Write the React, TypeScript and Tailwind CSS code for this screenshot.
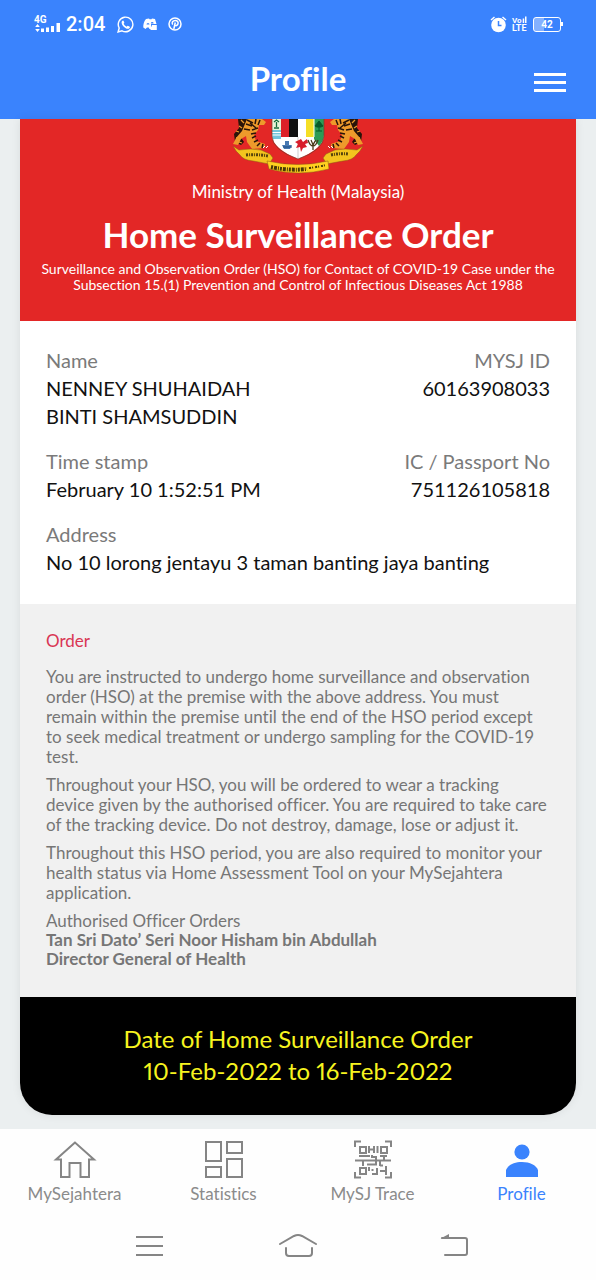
import React from "react";

function StatusBar() {
  return (
    <div className="flex h-12 items-center justify-between pr-[35px] pl-[34px]">
      <div className="flex items-center">
        <svg className="overflow-visible" width="28" height="20" viewBox="0 0 28 20" fill="#fff" aria-label="4G signal">
          <text x="0" y="9" fontSize="10" fontWeight="700" fontFamily="Roboto, sans-serif">4G</text>
          <path d="M3.500 10l2.300 3H1.200zM3.500 18l2.300-3H1.200z" />
          <path d="M7 14.500h3V18H7zM12 13.500h3V18h-3zM17 12h3v6h-3zM22.500 9H26v9h-3.500z" />
        </svg>
        <span className="ml-1 font-[Roboto,sans-serif] text-[20px] leading-6 font-medium">2:04</span>
        <svg className="ml-3" width="17" height="17" viewBox="0 0 24 24" fill="none" stroke="#fff" strokeWidth="2" aria-label="WhatsApp">
          <path d="M1.500 22.500l1.600-5.600a10.300 10.300 0 1 1 4 4z" />
          <path fill="#fff" stroke="none" d="M8.500 6.200c-.8 0-2 1.200-2 2.800 0 4 5.400 9 8.800 9 1.600 0 3-1 3-2.500 0-.5-2.900-2-3.300-1.800-.5.300-1.100 1.500-1.500 1.400-1.600-.6-3.500-2.400-4.100-4 0-.4 1-1 1-1.500s-1.100-3.300-1.900-3.400z" />
        </svg>
        <svg className="ml-2" width="16" height="14" viewBox="0 0 16 14" fill="#fff" aria-label="Game">
          <path d="M4 2l3-.5.5.8h2l.5-.8 3 .5 1.500 5H9v5H7.500l-.8-1.500H5L3.500 12 1.300 10.500C1.100 7.500 2 4 4 2z" />
          <path d="M9.800 8h5v5H8.500v-3.500h1.300z" />
          <path d="M4.500 7.500a1.500 1.500 0 0 1 3 0zM8.800 6.500a1.400 1.400 0 0 1 2.800 0z" fill="#3a83fd" />
        </svg>
        <svg className="ml-[10px]" width="14" height="14" viewBox="0 0 14 14" fill="none" stroke="#fff" aria-label="Pinterest">
          <circle cx="7" cy="7" r="6" strokeWidth="1.500" />
          <path strokeWidth="1.500" d="M4.700 7.700C3.300 5.500 5 3.500 7.200 3.500S10.500 5 10 6.800 7.500 9.300 6.800 8M7.300 5.500L5.800 12" />
        </svg>
      </div>
      <div className="flex items-center">
        <svg width="17" height="17" viewBox="0 0 17 17" fill="#fff" aria-label="Alarm">
          <circle cx="8.500" cy="9" r="7.300" />
          <path d="M1 4L4.500 1M12.500 1L16 4" stroke="#fff" strokeWidth="1.500" />
          <path d="M8.500 5v4.500h3" fill="none" stroke="#3a83fd" strokeWidth="1.500" />
        </svg>
        <svg className="ml-[5px] overflow-visible" width="16" height="16" viewBox="0 0 16 16" fill="#fff" aria-label="VoLTE">
          <text x="0" y="7" fontSize="8" fontWeight="700" fontFamily="Roboto, sans-serif">Vo</text>
          <path d="M10.700 2.500h1.500V7h-1.500zM13 .5h1.500V7H13z" />
          <text x="0" y="15" fontSize="9" fontWeight="700" fontFamily="Roboto, sans-serif">LTE</text>
        </svg>
        <span className="relative ml-[5px] flex h-[15px] w-7 items-center justify-center rounded-[3px] border border-white bg-linear-to-r from-[#84b1ff] from-40% to-transparent to-40% font-[Roboto,sans-serif] text-[10px] font-bold">
          42
          <span className="absolute -right-[3px] h-1 w-[2px] bg-white" />
        </span>
      </div>
    </div>
  );
}

function Tiger() {
  return (
    <g>
      <path d="M6 0h10l3 6-6 5-5 6 4 6-3 3-6-3-1-8 5-6z" fill="#2a1409" />
      <path d="M15 0h15l4 3-2 3-5 0-1 5-4 5 2 6 9 3-1 4-12 1-5-7-1-6-5 3-3 6-5-1 3-6 6-7z" fill="#ee9a2b" />
      <path d="M9 1l3 3M7 7l3 2M4 12l3 1M4 19l4 0M7 23l3 1" stroke="#ee9a2b" strokeWidth="1.300" />
      <path d="M15 1l6 3M14 5l6 2M12 10l6 1M20 11l6-2M19 15l5-1M20 19l4-2M22 23l4-2M25 27l3-3M24 0l-1 5M28 1l-2 5M18 4l6 5M31 25l-1 4" stroke="#2a1409" strokeWidth="1.500" />
      <path d="M31 29l2-2M34 29l2-2" stroke="#fff" />
    </g>
  );
}

function CoatOfArms() {
  return (
    <svg className="block" width="132" height="56" viewBox="0 0 132 56" aria-label="Coat of arms of Malaysia">
      <Tiger />
      <g transform="translate(132 0) scale(-1 1)"><Tiger /></g>
      <path d="M40 0h52v16c0 10-12 18-26 24C52 34 40 26 40 16z" fill="#fff" />
      <path d="M40 0h9v11h-9z" fill="#e8f2d6" />
      <path d="M40 11h9v9h-8l-1-4z" fill="#72c4dc" />
      <path d="M40 13.500h9M40 16h9" stroke="#fff" />
      <path d="M49 0h8v18h-8z" fill="#dc2028" />
      <path d="M57 0h9v18h-9z" fill="#101010" />
      <path d="M66 0h8v18h-8z" fill="#fff" />
      <path d="M74 0h8v18h-8z" fill="#f5df25" />
      <path d="M82 0h10v16q0 6-5 11l-5-7z" fill="#2d9b55" />
      <path d="M82 0v18" stroke="#fff" />
      <path d="M44.500 3v5M42 3l2.500-2L47 3M42 9h5" stroke="#176c3c" strokeWidth="1.300" fill="none" />
      <path d="M87 2l4 5-2 1h-4l-2-1zM87 7v5M84 12h6" fill="#075b29" stroke="#075b29" />
      <path d="M53 22h4v4h3l-2 4h-6l-2-4h3z" fill="#4878b1" />
      <path d="M51 28h9" stroke="#194980" />
      <path d="M66 18v21" stroke="#999" strokeWidth=".5" />
      <path d="M69 20l2 3 4-3 1 4-3 1 2 3-4 1-2 4-1-5-4 1 2-4-3-2z" fill="#d81d2b" />
      <path d="M76 21q2 6 5 6t5-6M79 21q2 4 2 6 0-2 3-6M81 26v5" fill="none" stroke="#4b3a1a" strokeWidth="1.300" />
      <path d="M40 0v17q0 14 26 23 26-9 26-23V0" fill="none" stroke="#7a392b" strokeWidth=".7" />
      <path d="M1 27l6 4q12-2 22 0l9 4 3 4-4 6q-10-2-16-3-10-1-13-6-4-3-7-9z" fill="#f3c41e" stroke="#8a5916" strokeWidth=".5" />
      <path d="M131 27l-6 4q-12-2-22 0l-9 4-3 4 4 6q10-2 16-3 10-1 13-6 4-3 7-9z" fill="#f3c41e" stroke="#8a5916" strokeWidth=".5" />
      <path d="M35 42q31 7 61 0l1 8q-31 8-60 0z" fill="#ffd120" stroke="#8a5916" strokeWidth=".5" />
      <path d="M14 36q12-1 22 1M99 36q9-2 17-1" fill="none" stroke="#54420c" strokeWidth="3" strokeDasharray="2 1 1 1" />
      <path d="M39 48q18 4 36 2" fill="none" stroke="#473707" strokeWidth="4" strokeDasharray="2 1 3 1 1 1" />
      <path d="M77 49q9-1 17-3" fill="none" stroke="#473707" strokeWidth="2" strokeDasharray="2 1 1 2" />
    </svg>
  );
}

function Field({ label, value, right = false }: { label: string; value: React.ReactNode; right?: boolean }) {
  return (
    <div className={right ? "text-right" : ""}>
      <dt className="text-[#7a7a7a]">{label}</dt>
      <dd className="text-[#111]">{value}</dd>
    </div>
  );
}

function HomeIcon() {
  return (
    <svg width="44" height="40" viewBox="0 0 44 40" fill="none" stroke="#858585" strokeWidth="2">
      <path d="M22 2.500L3 19.500h5V37h8.500V23h11v14H36V19.500h5z" />
    </svg>
  );
}

function StatisticsIcon() {
  return (
    <svg width="40" height="40" viewBox="0 0 40 40" fill="none" stroke="#858585" strokeWidth="2">
      <path d="M2 2h15v19H2zM23 2h15v11H23zM2 27h15v10H2zM23 19h15v18H23z" />
    </svg>
  );
}

function TraceIcon() {
  return (
    <svg width="40" height="40" viewBox="0 0 40 40" fill="none" stroke="#858585" strokeWidth="2">
      <path d="M2 7V1.500h6M32 1.500h6V7M38 32v5.500h-6M8 37.500H2V32" />
      <path d="M7 7h6v6H7zM28 7h6v6h-6zM7 28h6v6H7z" />
      <path d="M16 6v7M16 9.500h5M21 6v7M24.500 6v7M6 16h11M19 15v2h4v3M27 16h7M31 16v4M2 20.500h36M10 21v5M14 24.500h9V21M27 21v5M27 25.500h3M16 27v4M19.500 29v2M19 34h5v-6M27 31h6M33 26v9" />
    </svg>
  );
}

function ProfileIcon() {
  return (
    <svg width="40" height="40" viewBox="0 0 40 40" fill="#3a83fd">
      <circle cx="20" cy="12" r="7.600" />
      <path d="M4 37V30c2-5 8-8 16-8s14 3 16 8v7z" />
    </svg>
  );
}

const tabs = [
  { label: "MySejahtera", Icon: HomeIcon },
  { label: "Statistics", Icon: StatisticsIcon },
  { label: "MySJ Trace", Icon: TraceIcon },
  { label: "Profile", Icon: ProfileIcon, active: true },
];

export default function App() {
  return (
    <div className="min-h-screen bg-[#ebeff0] font-[Lato,sans-serif] [font-variant-ligatures:none]">
      <header className="h-[119px] bg-[#3a83fd] text-white">
        <StatusBar />
        <div className="grid grid-cols-[1fr_auto_1fr] items-center px-[30px] pt-[6px]">
          <span />
          <h1 className="text-[33px] leading-[48px] font-bold">Profile</h1>
          <button aria-label="Open menu" className="mt-2 flex flex-col gap-[5px] justify-self-end">
            <span className="h-[3px] w-8 bg-white" />
            <span className="h-[3px] w-8 bg-white" />
            <span className="h-[3px] w-8 bg-white" />
          </button>
        </div>
      </header>

      <main className="px-5 pb-[14px]">
        <article className="overflow-hidden rounded-b-[32px] bg-white shadow-[0_0_10px_rgba(0,0,0,0.08)]">
          <section className="flex h-[202px] flex-col items-center bg-[#e32726] text-center text-white">
            <CoatOfArms />
            <p className="mt-[5px] text-[17px] leading-6">Ministry of Health (Malaysia)</p>
            <h2 className="mt-[6px] text-[35px] leading-[48px] font-bold">Home Surveillance Order</h2>
            <p className="mt-[3px] text-[14px] leading-4">
              Surveillance and Observation Order (HSO) for Contact of COVID-19 Case under the<br />
              Subsection 15.(1) Prevention and Control of Infectious Diseases Act 1988
            </p>
          </section>

          <dl className="flex flex-col gap-[17px] px-[26px] pt-[25px] pb-7 text-[20px] leading-7">
            <div className="flex justify-between">
              <Field label="Name" value={<>NENNEY SHUHAIDAH<br />BINTI SHAMSUDDIN</>} />
              <Field right label="MYSJ ID" value="60163908033" />
            </div>
            <div className="flex justify-between">
              <Field label="Time stamp" value="February 10 1:52:51 PM" />
              <Field right label="IC / Passport No" value="751126105818" />
            </div>
            <Field label="Address" value="No 10 lorong jentayu 3 taman banting jaya banting" />
          </dl>

          <section className="bg-[#f1f1f1] px-[26px] pt-[27px] pb-[29px] text-[17px] leading-5 text-[#767676]">
            <h3 className="mb-4 text-[#d93654]">Order</h3>
            <div className="flex flex-col gap-2">
              <p>
                You are instructed to undergo home surveillance and observation<br />
                order (HSO) at the premise with the above address. You must<br />
                remain within the premise until the end of the HSO period except<br />
                to seek medical treatment or undergo sampling for the COVID-19<br />
                test.
              </p>
              <p>
                Throughout your HSO, you will be ordered to wear a tracking<br />
                device given by the authorised officer. You are required to take care<br />
                of the tracking device. Do not destroy, damage, lose or adjust it.
              </p>
              <p>
                Throughout this HSO period, you are also required to monitor your<br />
                health status via Home Assessment Tool on your MySejahtera<br />
                application.
              </p>
              <p className="leading-[19px]">
                Authorised Officer Orders<br />
                <strong>Tan Sri Dato’ Seri Noor Hisham bin Abdullah<br />Director General of Health</strong>
              </p>
            </div>
          </section>

          <section className="bg-black pt-[26px] pb-7 text-center text-[24px] leading-8 text-[#f7f41f]">
            Date of Home Surveillance Order<br />
            <span className="proportional-nums">10-Feb-2022 to 16-Feb-2022</span>
          </section>
        </article>
      </main>

      <footer className="bg-[#fefefe]">
        <nav className="grid grid-cols-4 pt-[11px]">
          {tabs.map(({ label, Icon, active }) => (
            <a key={label} href="#" className={active ? "flex flex-col items-center text-[17px] leading-6 text-[#3a83fd]" : "flex flex-col items-center text-[17px] leading-6 text-[#8b8b8b]"}>
              <Icon />
              <span className="mt-[2px]">{label}</span>
            </a>
          ))}
        </nav>
        <div className="flex h-[74px] items-center justify-between px-[122px] pt-[6px]">
          <button aria-label="Recent apps">
            <svg width="54" height="30" viewBox="0 0 54 30" stroke="#858585" strokeWidth="2"><path d="M14 6h27M14 15h27M14 24h27" /></svg>
          </button>
          <button aria-label="Home">
            <svg width="54" height="30" viewBox="0 0 54 30" fill="none" stroke="#858585" strokeWidth="2" strokeLinecap="round"><path d="M9 13L23 5q4-2 8 0l14 8M15 17v5q0 3 3 3h20q3 0 3-3v-5" /></svg>
          </button>
          <button aria-label="Back">
            <svg width="54" height="30" viewBox="0 0 54 30" fill="none" stroke="#858585" strokeWidth="2"><path d="M25 24h20q2 0 2-2V9q0-2-2-2H22" strokeLinecap="round" /><path d="M20.500 7.500L29 3v4.500z" fill="#858585" stroke="none" /></svg>
          </button>
        </div>
      </footer>
    </div>
  );
}
